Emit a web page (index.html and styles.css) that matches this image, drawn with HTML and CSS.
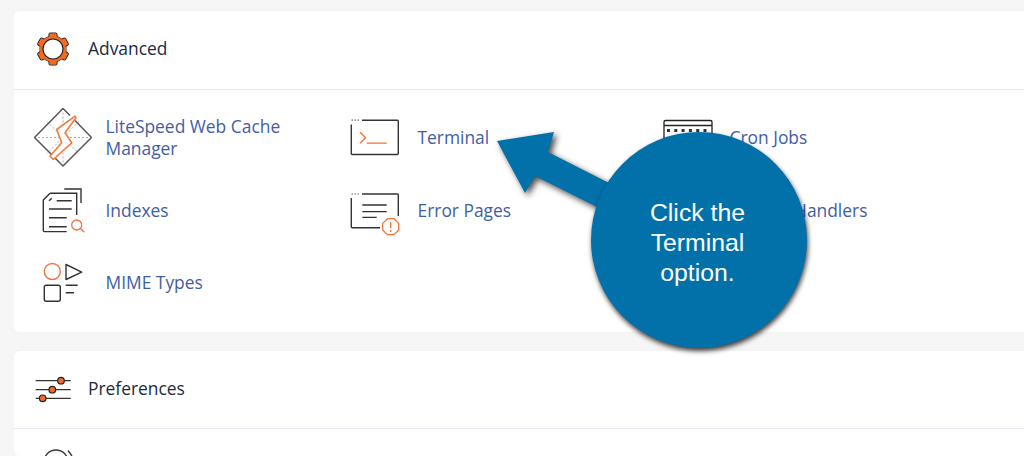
FILE: index.html
```html
<!DOCTYPE html>
<html lang="en">
<head>
    <meta charset="UTF-8">
    <title>Tools</title>
    <link rel="stylesheet" href="styles.css">
</head>
<body>
<div class="page">
    <section class="card card-advanced">
        <header class="card-header">
            <svg class="group-icon" width="36" height="36" viewBox="0 0 36 36">
                <g fill="#f36b21" stroke="#222" stroke-width="1.100">
                    <circle cx="18" cy="18" r="13"/>
                    <rect x="14" y="2" width="8" height="6" rx="1.500"/>
                    <rect x="14" y="2" width="8" height="6" rx="1.500" transform="rotate(60 18 18)"/>
                    <rect x="14" y="2" width="8" height="6" rx="1.500" transform="rotate(120 18 18)"/>
                    <rect x="14" y="2" width="8" height="6" rx="1.500" transform="rotate(180 18 18)"/>
                    <rect x="14" y="2" width="8" height="6" rx="1.500" transform="rotate(240 18 18)"/>
                    <rect x="14" y="2" width="8" height="6" rx="1.500" transform="rotate(300 18 18)"/>
                </g>
                <g fill="#f36b21">
                    <circle cx="18" cy="18" r="13"/>
                    <rect x="14.600" y="2.600" width="6.800" height="7"/>
                    <rect x="14.600" y="2.600" width="6.800" height="7" transform="rotate(60 18 18)"/>
                    <rect x="14.600" y="2.600" width="6.800" height="7" transform="rotate(120 18 18)"/>
                    <rect x="14.600" y="2.600" width="6.800" height="7" transform="rotate(180 18 18)"/>
                    <rect x="14.600" y="2.600" width="6.800" height="7" transform="rotate(240 18 18)"/>
                    <rect x="14.600" y="2.600" width="6.800" height="7" transform="rotate(300 18 18)"/>
                </g>
                <circle cx="18" cy="18" r="10" fill="#fff" stroke="#222" stroke-width="1.200"/>
            </svg>
            <h2>Advanced</h2>
        </header>
        <div class="items">
            <a class="item">
                <svg class="item-icon" width="58" height="60" viewBox="34 107.500 58 60">
                    <g fill="none" stroke="#aaa" stroke-width="1" stroke-dasharray="2 2">
                        <path d="M38 138H88M63 113V163M47 122 79 154M79 122 47 154"/>
                    </g>
                    <path d="M70 116 63 109 34.500 138 63 166.500 70 159.500M75 121 91.500 138 70 159.500" fill="none" stroke="#555" stroke-width="1.500" stroke-linejoin="round"/>
                    <path d="M75 116.700 56.700 130 61.700 143.300 50 156.700 53.300 160 71.700 143.300 65 133.300 76 118.300z" fill="#fff" stroke="#f47a3c" stroke-width="1.600" stroke-linejoin="round"/>
                </svg>
                <span>LiteSpeed Web Cache Manager</span>
            </a>
            <a class="item">
                <svg class="item-icon" width="58" height="60" viewBox="346 107.500 58 60">
                    <path d="M362 120.700H397.300a1 1 0 0 1 1 1V154a1 1 0 0 1-1 1H352.300a1 1 0 0 1-1-1V125" fill="none" stroke="#333" stroke-width="1.400"/>
                    <path d="M351.500 120.700h1.500M354.500 120.700h1.500M357.500 120.700h1.500" stroke="#666" stroke-width="1.200"/>
                    <path d="M360 132.700 365.700 138.300 360 143.700M366.700 143.700H386.700" fill="none" stroke="#f4733a" stroke-width="1.300"/>
                </svg>
                <span>Terminal</span>
            </a>
            <a class="item">
                <svg class="item-icon" width="58" height="60" viewBox="658 107.500 58 60">
                    <rect x="664" y="121" width="48" height="35" rx="1.500" fill="#fff" stroke="#222" stroke-width="1.300"/>
                    <path d="M664 126H712" stroke="#222" stroke-width="1.300"/>
                    <path d="M667 131h3M674.300 131h3M681.600 131h3M688.900 131h3M696.200 131h3M703.500 131h3" stroke="#333" stroke-width="3"/>
                </svg>
                <span>Cron Jobs</span>
            </a>
            <a class="item">
                <svg class="item-icon" width="58" height="60" viewBox="34 180 58 60">
                    <path d="M64.300 189H81V203M50 193.300H76.700V215M50 193.300 43.300 200V230.600a1 1 0 0 0 1 1H66.700" fill="none" stroke="#333" stroke-width="1.400"/>
                    <path d="M49 200.700 51.700 198.400M56.700 200.700H71.700M49 209H71.700M49 217.700H66.700M49 226.700H66.700" fill="none" stroke="#333" stroke-width="1.400"/>
                    <circle cx="76.700" cy="225" r="5" fill="none" stroke="#f4733a" stroke-width="1.300"/>
                    <path d="M80.500 228.500 84.300 232.300" stroke="#f4733a" stroke-width="1.300"/>
                </svg>
                <span>Indexes</span>
            </a>
            <a class="item">
                <svg class="item-icon" width="58" height="60" viewBox="346 180 58 60">
                    <path d="M362 194H397.300a1 1 0 0 1 1 1V216M380 227.700H352.300a1 1 0 0 1-1-1V198" fill="none" stroke="#333" stroke-width="1.400"/>
                    <path d="M351.500 194h1.500M354.500 194h1.500M357.500 194h1.500" stroke="#666" stroke-width="1.200"/>
                    <path d="M362.300 205H386.700M362.300 211.700H386.700M362.300 217.300H376.700" stroke="#333" stroke-width="1.300"/>
                    <path d="M387.400 218.700H394L398.700 223.400V230L394 234.700H387.400L382.700 230V223.400z" fill="#fff" stroke="#f4733a" stroke-width="1.300"/>
                    <path d="M390.700 221.700V228.300M390.700 230V232" stroke="#f4733a" stroke-width="1.300"/>
                </svg>
                <span>Error Pages</span>
            </a>
            <a class="item">
                <svg class="item-icon" width="58" height="60" viewBox="658 180 58 60"></svg>
                <span>Apache Handlers</span>
            </a>
            <a class="item">
                <svg class="item-icon" width="58" height="60" viewBox="34 252.500 58 60">
                    <circle cx="52.300" cy="272" r="8" fill="none" stroke="#f4733a" stroke-width="1.400"/>
                    <path d="M66 265 81.700 272.700 66 280z" fill="none" stroke="#333" stroke-width="1.400" stroke-linejoin="round"/>
                    <rect x="44.300" y="285.700" width="16" height="16" rx="2" fill="none" stroke="#333" stroke-width="1.400"/>
                    <path d="M65.700 285.700H77.700M65.700 293.300H74" stroke="#333" stroke-width="1.400"/>
                </svg>
                <span>MIME Types</span>
            </a>
        </div>
    </section>

    <section class="card">
        <header class="card-header card-header-short">
            <svg class="group-icon" width="36" height="28" viewBox="35 377 36 28">
                <path d="M35.700 381.700H70.700M35.700 390.700H70.700M35.700 399.300H70.700" stroke="#333" stroke-width="1.300"/>
                <circle cx="61" cy="381.700" r="3.300" fill="#f26a2a" stroke="#222" stroke-width="1.200"/>
                <circle cx="52.300" cy="390.700" r="3.300" fill="#f26a2a" stroke="#222" stroke-width="1.200"/>
                <circle cx="42.700" cy="399.300" r="3.300" fill="#f26a2a" stroke="#222" stroke-width="1.200"/>
            </svg>
            <h2>Preferences</h2>
        </header>
        <div class="items-cut">
            <svg class="cut-icon" width="58" height="16" viewBox="34 440 58 16">
                <circle cx="56" cy="462" r="12" fill="none" stroke="#333" stroke-width="1.300"/>
                <path d="M68 450.500 72 456" stroke="#333" stroke-width="1.300"/>
            </svg>
        </div>
    </section>
</div>

<div class="callout">
    <svg class="callout-arrow" width="130" height="100" viewBox="0 0 130 100">
        <path d="M2 16 59 7 53 27 118 60 102 82 40 51 30 68z" fill="#0271a9"/>
    </svg>
    <div class="callout-bubble">Click the<br>Terminal<br>option.</div>
</div>
</body>
</html>
```

FILE: styles.css
```css
html, body {
    margin: 0;
    height: 456px;
    overflow: hidden;
}

body {
    font-family: "Open Sans", sans-serif;
    background-color: #f6f6f6;
    position: relative;
}

.page {
    padding: 11px 0 0 14px;
}

.card {
    background-color: white;
    border-radius: 6px 0 0 6px;
    box-shadow: 0 0 6px rgba(0, 0, 0, 0.02);
}

.card-advanced {
    height: 321px;
    margin-bottom: 19px;
}

.card-header {
    height: 79px;
    box-sizing: border-box;
    border-bottom: 1px solid #e8e9f0;
    display: flex;
    align-items: center;
    padding-left: 21px;
    gap: 17px;
}

.card-header-short {
    height: 78px;
}

.card-header h2 {
    margin: 0 0 4px;
    font-size: 17.4px;
    font-weight: 400;
    color: #1b2a3d;
}

.group-icon {
    flex: none;
    margin-bottom: 2px;
}

.card-header-short .group-icon {
    margin-bottom: 0;
}

.items {
    display: grid;
    grid-template-columns: repeat(3, 312px);
    grid-auto-rows: 72.5px;
    padding-top: 11px;
}

.items-cut {
    height: 27px;
    padding: 11px 0 0 20px;
    box-sizing: border-box;
}

.cut-icon {
    display: block;
}

.item {
    display: flex;
    align-items: center;
    color: #3f5ea3;
    font-size: 17.4px;
    line-height: 22px;
}

.item-icon {
    flex: none;
    margin-left: 20px;
    margin-right: 13.5px;
}

.item span {
    width: 190px;
}

.callout {
    position: absolute;
    left: 495px;
    top: 125px;
    width: 320px;
    height: 230px;
}

.callout-arrow {
    position: absolute;
    left: 0;
    top: 0;
    filter: drop-shadow(3px 3px 3px rgba(0, 0, 0, 0.7));
}

.callout-bubble {
    position: absolute;
    left: 96px;
    top: 7px;
    width: 216px;
    height: 216px;
    box-sizing: border-box;
    padding: 6px 3px 0 0;
    border-radius: 50%;
    background-color: #0271a9;
    box-shadow: 1px 3px 5px rgba(0, 0, 0, 0.75);
    color: white;
    font-family: "Liberation Sans", Arial, sans-serif;
    font-size: 24.8px;
    line-height: 30px;
    text-align: center;
    display: flex;
    align-items: center;
    justify-content: center;
}
```
